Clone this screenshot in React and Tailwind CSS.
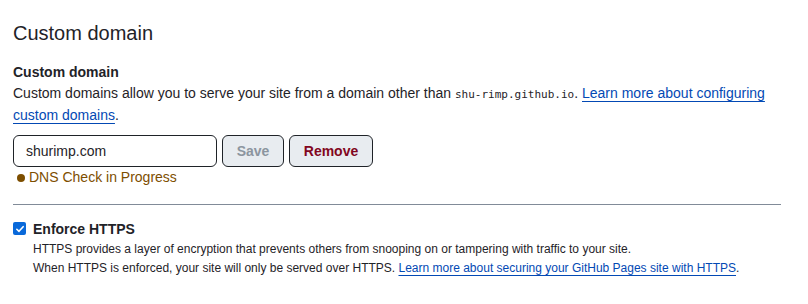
export default function App() {
  return (
    <div className="w-[808px] h-[304px] bg-white text-[#1f2328] font-['Liberation_Sans',sans-serif]">
      <div className="w-[768px] ml-[13px] pt-[18px]">
        <h2 className="text-[20px] leading-[30px] font-normal">Custom domain</h2>

        <div className="mt-[14px]">
          <p className="text-[14px] leading-[21px] font-semibold">Custom domain</p>
          <p className="text-[14px] leading-[21px]">
            Custom domains allow you to serve your site from a domain other than{' '}
            <code className="font-['DejaVu_Sans_Mono',monospace] text-[11px]">shu-rimp.github.io</code>.{' '}
            <a href="#" className="text-[#0349b4] underline underline-offset-[3px]">
              Learn more about configuring custom domains
            </a>
            .
          </p>
        </div>

        <div className="mt-[9px] flex items-center gap-[5px]">
          <input
            type="text"
            defaultValue="shurimp.com"
            className="w-[204px] h-[32px] px-[12px] text-[14px] border border-[#1f2328] rounded-[6px] outline-none"
          />
          <button className="h-[32px] w-[62px] text-[14px] font-semibold text-[#8c959f] bg-[#e8ecf0] border border-[#1f2328] rounded-[6px]">
            Save
          </button>
          <button className="h-[32px] w-[84px] text-[14px] font-semibold text-[#82071e] bg-[#e8ecf0] border border-[#1f2328] rounded-[6px]">
            Remove
          </button>
        </div>

        <p className="flex items-center gap-[4px] text-[14px] leading-[21px] text-[#7d4e00]">
          <span className="inline-block w-[8px] h-[8px] ml-[4px] rounded-full bg-[#7d4e00]" />
          DNS Check in Progress
        </p>

        <div className="mt-[16px] h-px bg-[#818b98]" />

        <div className="mt-[14px] flex gap-[7px]">
          <span className="mt-[3px] w-[13px] h-[13px] rounded-[2px] bg-[#0969da] flex items-center justify-center shrink-0">
            <svg viewBox="0 0 12 12" className="w-[10px] h-[10px]">
              <path d="M2.2 6.3 L4.8 8.8 L9.8 3.2" fill="none" stroke="white" strokeWidth="1.9" strokeLinecap="round" strokeLinejoin="round" />
            </svg>
          </span>
          <div>
            <p className="text-[14px] leading-[21px] font-semibold">Enforce HTTPS</p>
            <p className="text-[12px] leading-[19px]">
              HTTPS provides a layer of encryption that prevents others from snooping on or tampering with traffic to your site.
              <br />
              When HTTPS is enforced, your site will only be served over HTTPS.{' '}
              <a href="#" className="text-[#0349b4] underline underline-offset-[3px]">
                Learn more about securing your GitHub Pages site with HTTPS
              </a>
              .
            </p>
          </div>
        </div>
      </div>
    </div>
  )
}
